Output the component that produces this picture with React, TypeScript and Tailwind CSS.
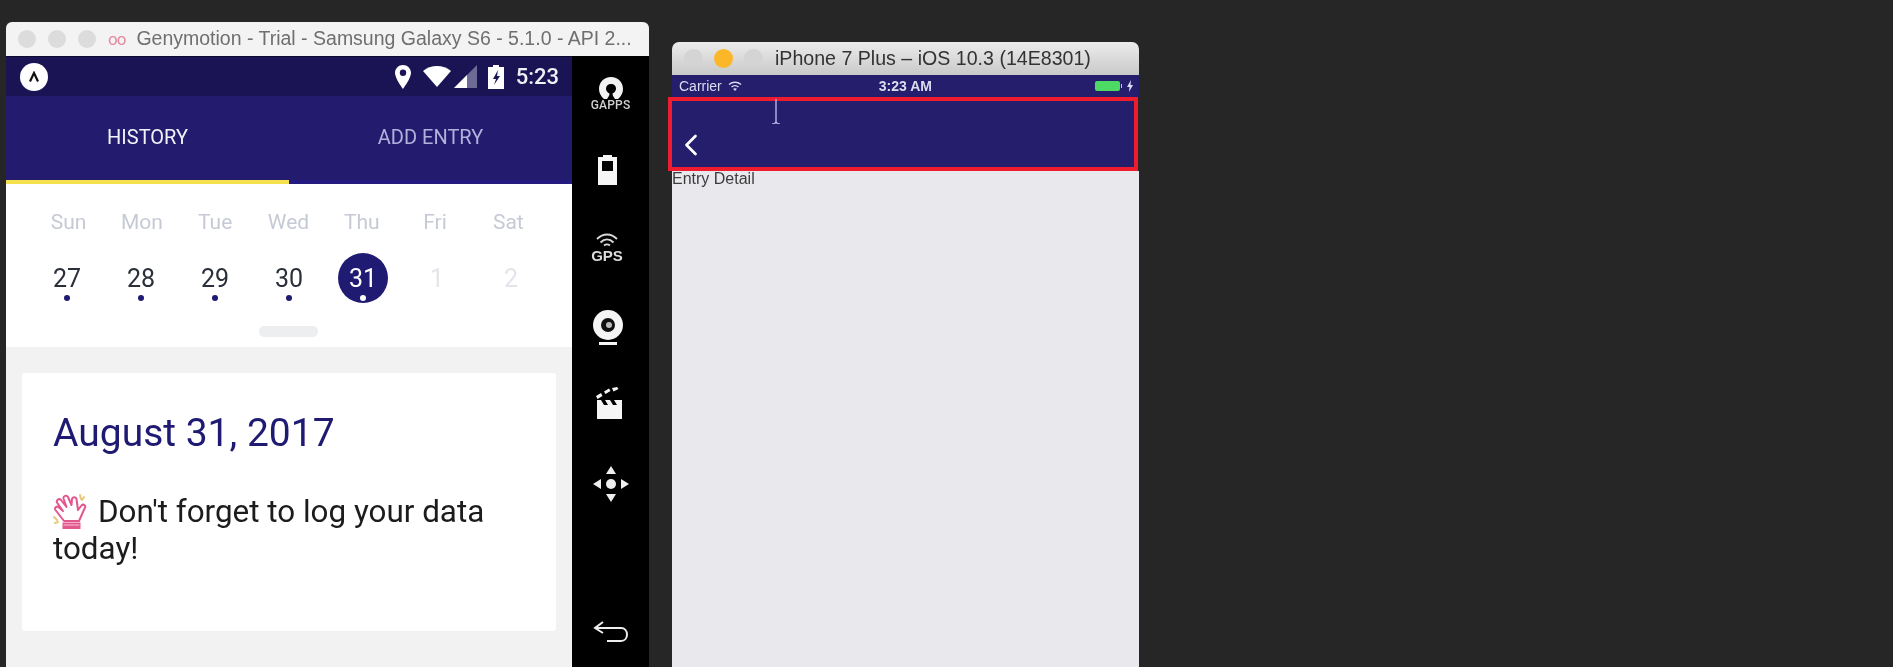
import { ChevronLeft } from 'lucide-react';

const days = ['Sun', 'Mon', 'Tue', 'Wed', 'Thu', 'Fri', 'Sat'];
const dates = ['27', '28', '29', '30', '31', '1', '2'];

function HandIcon() {
  return (
    <svg viewBox="0 0 34 37" className="inline-block w-[34px] h-[37px] mr-[11px] align-[-8px]" fill="none" stroke="#e2588c" strokeWidth="2" strokeLinejoin="round" strokeLinecap="round">
      <path d="M11 28 2.500 17c-1.500-2.500 1.500-4.500 3.500-2.500L10 18 4 9.500C3 7 6 5 8 7l5.500 7L10.500 5.500C10 3 13.500 1.500 15 4l3.500 8L19 6c.5-2.500 4-2.500 4.500 0L25 17l3.500-4.500c2-2 4.500 0 3.500 2L26 28Z" />
      <path d="M9.500 29.500h18v6.500h-18Z" fill="#e2588c" stroke="none" />
      <path d="M11 32h15" stroke="#f7c4d6" strokeWidth="1.200" />
      <path d="M27 2l1 4M31 4l-2 3M1 24l3 3M2 30l3-1" stroke="#e8c77c" />
    </svg>
  );
}

function AndroidStatusBar() {
  return (
    <div className="h-[40px] bg-[#1a1454] flex items-center pl-[14px] pr-[13px] border-t border-[#0e0b33]">
      <div className="w-[28px] h-[28px] rounded-full bg-white flex items-center justify-center">
        <svg viewBox="0 0 12 12" className="w-[12px] h-[12px]" fill="none" stroke="#111" strokeWidth="2.200">
          <path d="M2 10.500 6 2l4 8.500" />
        </svg>
      </div>
      <div className="flex-1" />
      <svg viewBox="0 0 16 24" className="w-[16px] h-[24px] mr-[12px]" fill="#fff">
        <path fillRule="evenodd" d="M8 0C3.600 0 0 3.400 0 7.800 0 13.500 8 24 8 24s8-10.500 8-16.200C16 3.400 12.400 0 8 0Zm0 11a3.200 3.200 0 1 1 0-6.400A3.200 3.200 0 0 1 8 11Z" />
      </svg>
      <svg viewBox="0 0 28 21" className="w-[28px] h-[21px] mr-[3px]" fill="#fff">
        <path d="M14 21 0 5C4 1.800 8.800 0 14 0s10 1.800 14 5Z" />
      </svg>
      <svg viewBox="0 0 23 23" className="w-[23px] h-[23px] mr-[11px]">
        <path d="M0 23 23 0v23Z" fill="#6d6a96" />
        <path d="M0 23 13 10v13Z" fill="#fff" />
      </svg>
      <svg viewBox="0 0 16 24" className="w-[16px] h-[24px] mr-[12px]" fill="#fff">
        <path fillRule="evenodd" d="M5 0h6v2h5v22H0V2h5Zm5 5-5 9h3l-2 6 6-9H9Z" />
      </svg>
      <span className="text-[22px] font-medium text-[#f0f0f5] leading-none font-['Roboto',sans-serif]">5:23</span>
    </div>
  );
}

function SideBar() {
  return (
    <div className="w-[77px] bg-black flex flex-col items-center text-white font-['Roboto',sans-serif]">
      <svg viewBox="0 0 26 22" className="w-[26px] h-[22px] mt-[21px]" fill="#f2f2f2">
        <path d="M13 0C6 0 1 5 1 12c0 4 2 7.500 5 10h3c1-2 2.500-3 2.500-5.500C9.500 15.500 8 14 8 11.500 8 9 10 7 13 7s5 2 5 4.500c0 2.500-1.500 4-3.500 5C14.500 19 16 20 17 22h3c3-2.500 5-6 5-10C25 5 20 0 13 0Z" />
      </svg>
      <span className="text-[12px] leading-[12px] font-medium text-[#d0d0d0] tracking-[0.2px]">GAPPS</span>
      <svg viewBox="0 0 19 30" className="w-[19px] h-[30px] mt-[44px] mr-[6px]" fill="#f5f5f5">
        <path fillRule="evenodd" d="M5 0h9v2h5v28H0V2h5ZM4 6v10h11V6Z" />
      </svg>
      <svg viewBox="0 0 22 14" className="w-[22px] h-[14px] mt-[48px] mr-[7px]" fill="none" stroke="#d8d8d8" strokeWidth="1.800">
        <path d="M1 6c6-6 14-6 20 0M4.500 9.500c4-4 9-4 13 0M8 12.500c2-1.500 4-1.500 6 0" />
      </svg>
      <span className="text-[15px] leading-[13px] font-bold text-[#dcdcdc] mt-[2px] mr-[7px] font-['Liberation_Sans',sans-serif]">GPS</span>
      <svg viewBox="0 0 30 36" className="w-[30px] h-[36px] mt-[48px] mr-[6px]">
        <circle cx="15" cy="15" r="15" fill="#f5f5f5" />
        <circle cx="15" cy="15" r="7" fill="#111" />
        <circle cx="16" cy="15" r="3" fill="#bbb" />
        <path d="M6 32h18v3H6Z" fill="#f5f5f5" />
      </svg>
      <svg viewBox="0 0 27 32" className="w-[27px] h-[32px] mt-[41px] mr-[3px]" fill="#f5f5f5">
        <path d="M1 13h25v19H1Z" />
        <path d="M0 9 5 6l1.500 3-5 3ZM8 4.500l5-3L14.500 4l-5 3ZM16 1l5-1 1.500 2-5 2.500Z" />
        <path d="M5 13h4l3 5H8ZM14 13h4l3 5h-4Z" fill="#000" />
      </svg>
      <svg viewBox="0 0 36 36" className="w-[36px] h-[36px] mt-[47px]" fill="#eee">
        <path d="M18 0l5 8H13ZM18 36l-5-8h10ZM0 18l8-5v10ZM36 18l-8 5V13Z" />
        <circle cx="18" cy="18" r="5" />
      </svg>
      <svg viewBox="0 0 36 22" className="w-[36px] h-[22px] mt-[119px]" fill="none" stroke="#eee" strokeWidth="2">
        <path d="M10 1 2 7l8 5M2 7h26c8 0 8 13 0 13H14" />
      </svg>
    </div>
  );
}

function AndroidWindow() {
  return (
    <div className="w-[643px] ml-[6px] mt-[22px] flex flex-col shrink-0 font-['Roboto',sans-serif]">
      <div className="h-[34px] rounded-t-[6px] bg-[#f3f3f3] flex items-center pl-[12px]">
        <span className="w-[18px] h-[18px] rounded-full bg-[#dcdcdc]" />
        <span className="w-[18px] h-[18px] rounded-full bg-[#dcdcdc] ml-[12px]" />
        <span className="w-[18px] h-[18px] rounded-full bg-[#dcdcdc] ml-[12px]" />
        <span className="text-[#e58aa0] text-[17px] leading-none ml-[12px] tracking-[-1px]">oo</span>
        <span className="text-[19.5px] leading-none text-[#6f6f6f] ml-[11px] whitespace-nowrap font-['Liberation_Sans',sans-serif]">Genymotion - Trial - Samsung Galaxy S6 - 5.1.0 - API 2...</span>
      </div>
      <div className="flex h-[620px]">
        <div className="w-[566px] flex flex-col">
          <AndroidStatusBar />
          <div className="h-[88px] bg-[#231b6e] flex text-[20px]">
            <div className="w-[283px] border-b-[4px] border-[#f5e050] flex justify-center pt-[26px] text-[#f2f2f7]">HISTORY</div>
            <div className="w-[283px] border-b-[4px] border-[#231b80] flex justify-center pt-[26px] text-[#b4b0dc]">ADD ENTRY</div>
          </div>
          <div className="h-[163px] bg-white flex flex-col">
            <div className="grid grid-cols-7 w-[513px] ml-[26px] mt-[25px] text-[21px] leading-[26px] text-[#c6cad4] text-center">
              {days.map((d) => (
                <span key={d}>{d}</span>
              ))}
            </div>
            <div className="grid grid-cols-7 w-[518px] ml-[24px] mt-[18px] text-center">
              {dates.map((n, i) => (
                <div key={n} className="flex justify-center">
                  <div className={`relative w-[50px] h-[50px] rounded-full flex items-center justify-center text-[25px] leading-none ${i === 4 ? 'bg-[#1f1a72] text-white' : i > 4 ? 'text-[#e3e5ea]' : 'text-[#2b2f3a]'}`}>
                    {n}
                    {i < 4 && <span className="absolute left-[22px] top-[42px] w-[6px] h-[6px] rounded-full bg-[#1f1a72]" />}
                    {i === 4 && <span className="absolute left-[22px] top-[42px] w-[6px] h-[6px] rounded-full bg-white" />}
                  </div>
                </div>
              ))}
            </div>
            <div className="w-[59px] h-[11px] rounded-[5px] bg-[#eceef0] ml-[253px] mt-[23px]" />
          </div>
          <div className="flex-1 bg-[#f2f2f2] pt-[26px] pl-[16px] pr-[16px]">
            <div className="h-[258px] bg-white rounded-[3px] pl-[32px] pr-[20px] pt-[36px]">
              <div className="text-[39px] leading-[48px] text-[#1f1a72] -ml-[1px]">August 31, 2017</div>
              <div className="text-[31.400px] leading-[37px] text-[#1c1c1c] mt-[36px] -ml-[1px]">
                <HandIcon />
                Don't forget to log your data today!
              </div>
            </div>
          </div>
        </div>
        <SideBar />
      </div>
    </div>
  );
}

function IosWindow() {
  return (
    <div className="relative w-[467px] ml-[23px] mt-[42px] flex flex-col shrink-0 font-['Liberation_Sans',sans-serif]">
      <div className="h-[33px] rounded-t-[7px] bg-gradient-to-b from-[#ececec] to-[#c9c9c9] flex items-center pl-[12px]">
        <span className="w-[19px] h-[19px] rounded-full bg-[#d4d4d4]" />
        <span className="w-[19px] h-[19px] rounded-full bg-[#fbb728] ml-[11px]" />
        <span className="w-[19px] h-[19px] rounded-full bg-[#d4d4d4] ml-[11px]" />
        <span className="text-[19.600px] leading-none text-[#333] ml-[12px] whitespace-nowrap">iPhone 7 Plus – iOS 10.3 (14E8301)</span>
      </div>
      <div className="h-[22px] bg-[#241e6c] flex items-center pl-[7px] pr-[6px] text-[14px] text-[#dcdcf0]">
        <span>Carrier</span>
        <svg viewBox="0 0 14 10" className="w-[14px] h-[10px] ml-[6px]" fill="none" stroke="#dcdcf0" strokeWidth="1.400">
          <path d="M1 3.500c3.500-3 8.500-3 12 0M3.500 6c2-1.800 5-1.800 7 0" />
          <path d="M7 10 5 7.800c1.200-.8 2.800-.8 4 0Z" fill="#dcdcf0" stroke="none" />
        </svg>
        <span className="ml-[137px] font-bold">3:23 AM</span>
        <div className="flex-1" />
        <span className="w-[25px] h-[10px] rounded-[2px] bg-[#4cd964]" />
        <span className="w-[1px] h-[4px] bg-[#c8c8e0] ml-[1px]" />
        <svg viewBox="0 0 6 12" className="w-[6px] h-[12px] ml-[5px]" fill="#dcdcf0">
          <path d="M4 0 0 7h2.500L2 12l4-7H3.500Z" />
        </svg>
      </div>
      <div className="h-[74px] -ml-[4px] w-[470px] border-[4px] border-[#ee1c2e] bg-[#241e6c] flex items-end pl-[1px] pb-[4px]">
        <ChevronLeft className="w-[36px] h-[36px] text-white" strokeWidth={1.800} />
      </div>
      <div className="absolute left-[99px] top-[56px] w-[10px] h-[26px]">
        <svg viewBox="0 0 10 26" className="w-[10px] h-[26px]" fill="none" stroke="#b9b6e6" strokeWidth="1.400">
          <path d="M5 1v22M1 26c2 0 4-1 4-3 0 2 2 3 4 3" />
        </svg>
      </div>
      <div className="h-[496px] bg-[#e8e8ed] text-[16px] leading-[14px] text-[#3c3c3c] pt-[1px]">Entry Detail</div>
    </div>
  );
}

export default function App() {
  return (
    <div className="w-[1893px] h-[667px] bg-[#262626] flex items-start overflow-hidden blur-[0.6px]">
      <AndroidWindow />
      <IosWindow />
    </div>
  );
}
